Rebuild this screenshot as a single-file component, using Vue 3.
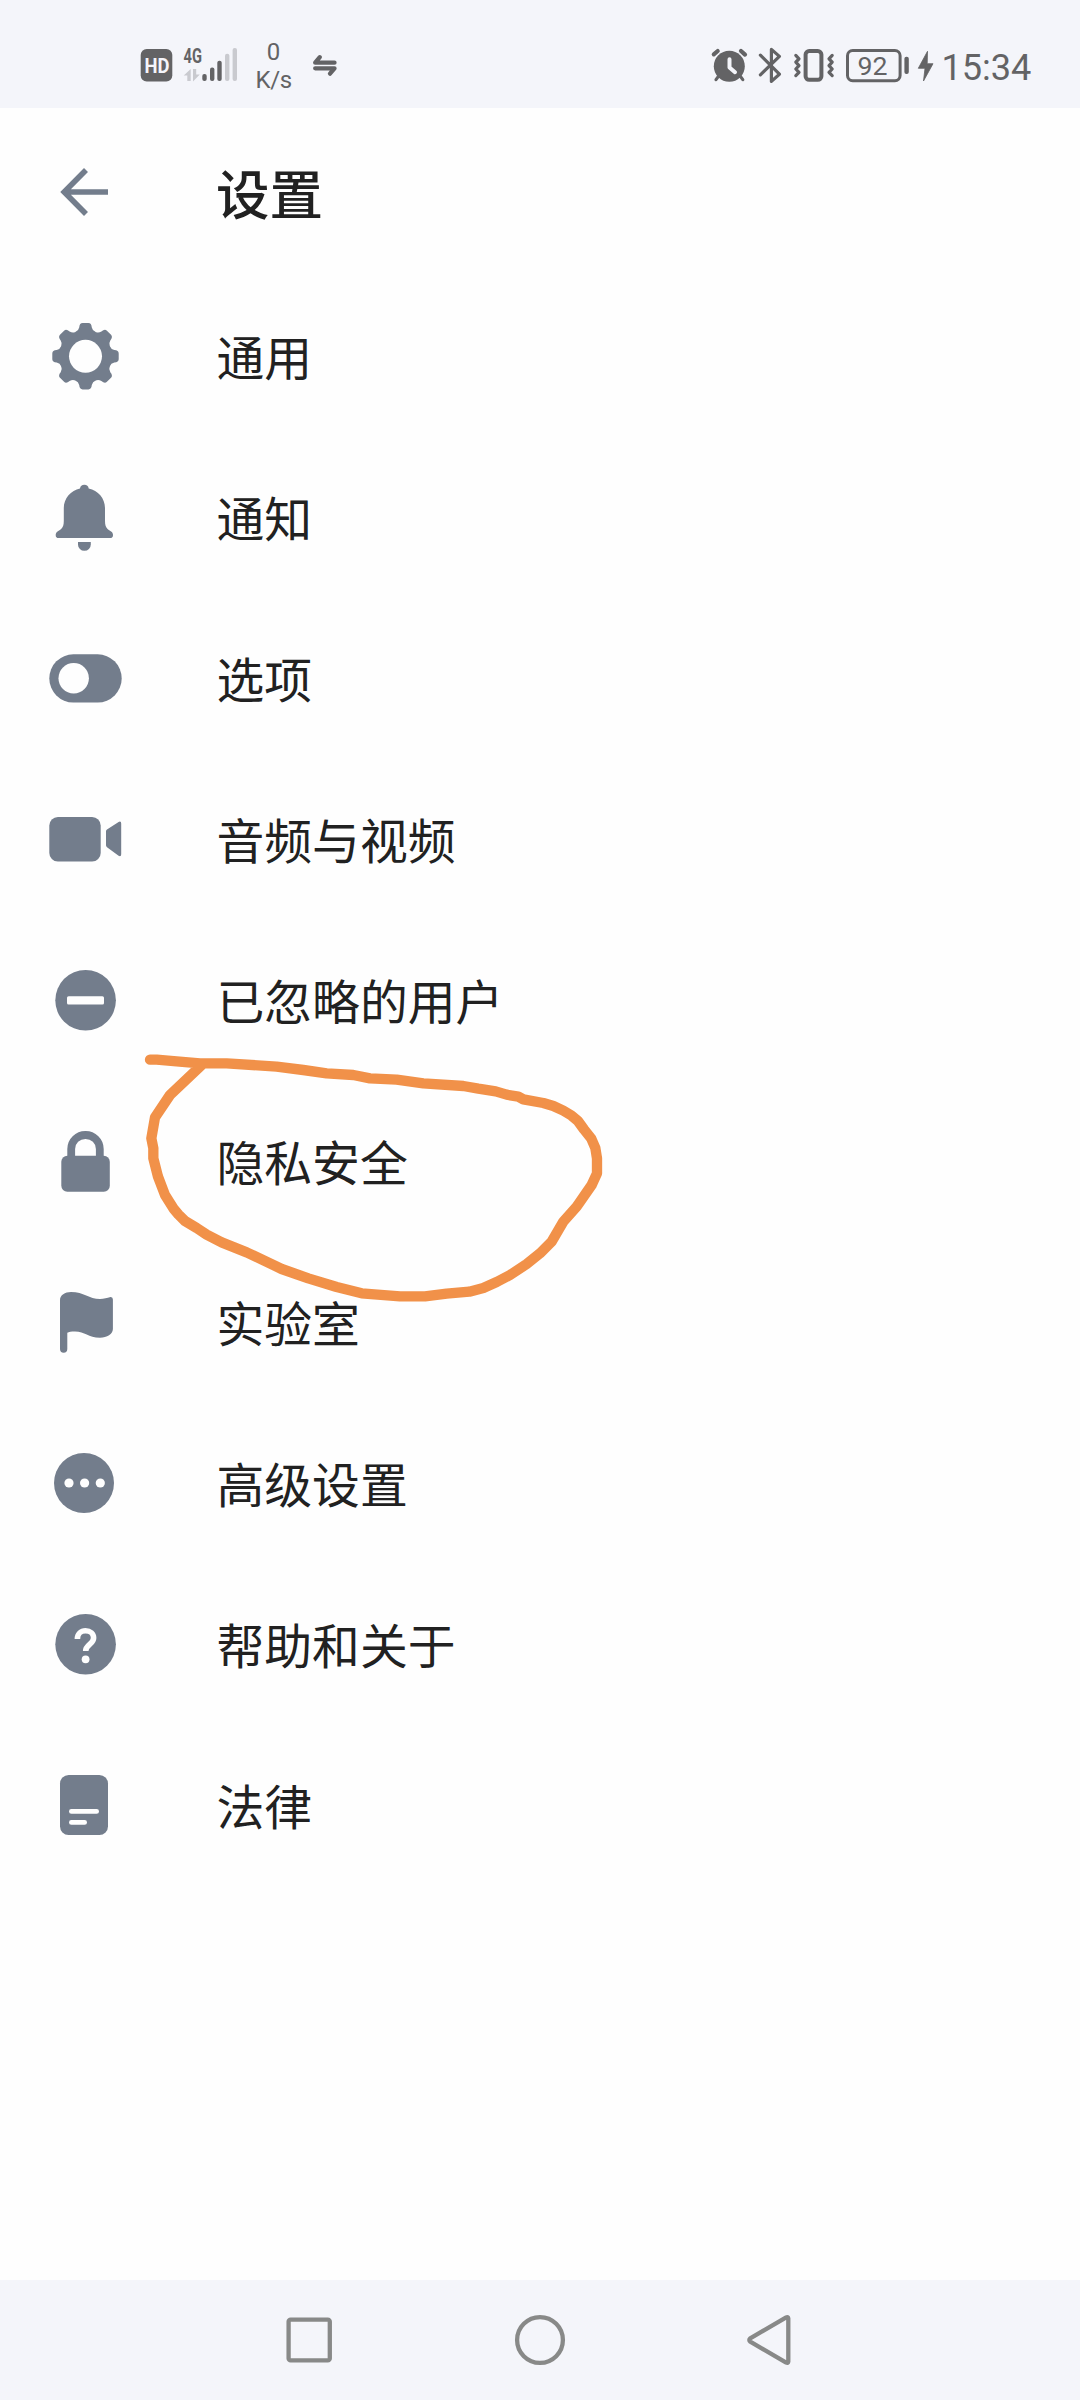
<script setup>
const items = [
  { icon: 'gear', label: '通用' },
  { icon: 'bell', label: '通知' },
  { icon: 'toggle', label: '选项' },
  { icon: 'video', label: '音频与视频' },
  { icon: 'ignored', label: '已忽略的用户' },
  { icon: 'lock', label: '隐私安全' },
  { icon: 'flag', label: '实验室' },
  { icon: 'more', label: '高级设置' },
  { icon: 'help', label: '帮助和关于' },
  { icon: 'legal', label: '法律' },
]
const teeth = [0, 45, 90, 135, 180, 225, 270, 315]
</script>

<template>
  <div class="screen">
    <header class="status">
      <svg class="status-left" width="400" height="108" viewBox="0 0 400 108">
        <rect x="140.7" y="49" width="31.6" height="32.6" rx="6" fill="#636365" />
        <text x="144.4" y="73" font-size="21" font-weight="700" fill="#f4f5fa" textLength="25" lengthAdjust="spacingAndGlyphs">HD</text>
        <text x="183.6" y="63" font-size="21" font-weight="700" textLength="18.4" lengthAdjust="spacingAndGlyphs">4G</text>
        <g fill="#c9cacf">
          <path d="M190.7 69V81H187.3V75.6H183.7Z" />
          <path d="M193 69H196.2V74.6H199.8L193 81.4Z" />
          <rect x="225" y="53.7" width="4.4" height="27.4" rx="2" />
          <rect x="232.6" y="48" width="4.4" height="33.1" rx="2" />
        </g>
        <rect x="202.3" y="74" width="4.4" height="7.1" rx="2" />
        <rect x="210" y="67.6" width="4.4" height="13.5" rx="2" />
        <rect x="217.3" y="60.7" width="4.4" height="20.4" rx="2" />
        <text x="273.6" y="60.4" font-size="24" text-anchor="middle">0</text>
        <text x="255.4" y="88.4" font-size="24" textLength="36.8">K/s</text>
        <g fill="none" stroke="#636365" stroke-width="4.3" stroke-linecap="round" stroke-linejoin="round">
          <path d="M334.5 62.7H315.2L319.8 57.2" />
          <path d="M315.2 68.3H334.5L330 73.6" />
        </g>
      </svg>
      <svg class="status-right" width="380" height="108" viewBox="700 0 380 108">
        <circle cx="729.3" cy="66.3" r="15.5" />
        <g fill="none" stroke="#636365" stroke-width="4.2" stroke-linecap="round" stroke-linejoin="round">
          <path d="M713.8 54.3L717.7 51M741 51L745 54.6" />
          <path stroke-width="3.2" d="M718.4 76.4L716 79.6M740.4 76.4L742.8 79.6" />
          <path stroke="#f4f5fa" stroke-width="4" d="M729.5 59.3V67.4L735 72.2" />
          <path stroke-width="3.2" d="M760.4 55.2L779.4 74.2L771.4 81.4V49.4L779.4 56.4L760.4 74.8" />
          <rect stroke-width="4" x="805.6" y="51" width="15.8" height="28.8" rx="3.6" />
          <path stroke-width="3.2" d="M795.8 55.4L799 58.8L795.8 62.2L799 65.6L795.8 69L799 72.4L795.8 75.6" />
          <path stroke-width="3.2" d="M832.2 55.4L829 58.8L832.2 62.2L829 65.6L832.2 69L829 72.4L832.2 75.6" />
          <rect stroke-width="3" x="847.5" y="50.5" width="52.6" height="30.2" rx="5.2" />
        </g>
        <rect x="904.4" y="56.7" width="4.4" height="17.4" rx="2" />
        <text x="857.6" y="75.4" font-size="26.5" textLength="30" lengthAdjust="spacingAndGlyphs">92</text>
        <path d="M927.5 51.3L918.3 68.3H925L923.5 81L933 63.7H927.2Z" stroke="#636365" stroke-width="0.8" stroke-linejoin="round" />
        <text x="941.4" y="80.3" font-size="37.5" textLength="90" lengthAdjust="spacingAndGlyphs">15:34</text>
      </svg>
    </header>

    <div class="toolbar">
      <svg class="icon" width="216" height="168" viewBox="0 0 216 168">
        <path d="M86 62L64.2 84L86 106M63 84H108" fill="none" stroke="#737d8c" stroke-width="5.6" />
      </svg>
      <h1 class="title">设置</h1>
    </div>

    <main class="list">
      <div v-for="item in items" :key="item.icon" class="row">
        <svg class="icon" width="216" height="161" viewBox="0 0 216 161">
          <g v-if="item.icon === 'gear'" transform="translate(85.5 80.3)">
            <circle r="26" />
            <path
              v-for="a in teeth"
              :key="a"
              :transform="`rotate(${a})`"
              d="M0 0L10.2 -24.2Q7 -25.4 6.3 -28.8Q5.9 -33.2 2.9 -33.2H-2.9Q-5.9 -33.2 -6.3 -28.8Q-7 -25.4 -10.2 -24.2Z"
            />
            <circle r="16.5" fill="#fefefe" />
          </g>
          <g v-else-if="item.icon === 'bell'">
            <path d="M80 51.6A4.4 4.4 0 0 1 88.7 51.6C98 53.5 105 61.5 105 71V84C105 92 108.5 92.5 111.5 94.8C112.7 95.8 113 97 113 98.2Q113 101 110 101H58.6Q55.7 101 55.7 98.2C55.7 97 56 95.8 57.2 94.8C60.2 92.5 63.8 92 63.8 84V71C63.8 61.5 71 53.5 80 51.6Z" />
            <path d="M78 105H90.8V107.4A6.4 6.4 0 0 1 78 107.4Z" />
          </g>
          <g v-else-if="item.icon === 'toggle'">
            <rect x="49.3" y="56.3" width="72.4" height="48.2" rx="24.1" />
            <circle cx="73.7" cy="80.3" r="15.2" fill="#fefefe" />
          </g>
          <g v-else-if="item.icon === 'video'">
            <rect x="49.3" y="58" width="51.4" height="44.6" rx="8.6" />
            <path d="M106 72.2Q106 71 107 70.4L118.6 62.9Q121.2 61.6 121.2 64.4V95.2Q121.2 98 118.6 96.8L107 88.2Q106 87.5 106 86.3Z" />
          </g>
          <g v-else-if="item.icon === 'ignored'">
            <circle cx="85.6" cy="80.3" r="30.3" />
            <rect x="67" y="76.2" width="37" height="8.4" rx="1.6" fill="#fefefe" />
          </g>
          <g v-else-if="item.icon === 'lock'">
            <rect x="61.3" y="74.7" width="48.5" height="36" rx="6" />
            <path d="M71.2 77V68A14.2 14 0 0 1 85.5 54A14.2 14 0 0 1 99.8 68V77" fill="none" stroke="#737d8c" stroke-width="7.8" />
          </g>
          <path
            v-else-if="item.icon === 'flag'"
            d="M60 58C60 53 65 50 71 50C84 50 89 57 100 57C104 57 107 55.8 110.5 55Q112.9 54.8 112.9 57.5V87C112.9 92 107 95.7 100 95.7C88 95.7 85 89.5 75 89.5C71 89.5 69 89.8 67.3 90.7V107A3.65 3.65 0 0 1 60 107Z"
          />
          <g v-else-if="item.icon === 'more'">
            <circle cx="84" cy="80" r="30" />
            <g fill="#fefefe">
              <circle cx="69" cy="80" r="4.6" />
              <circle cx="84.6" cy="80" r="4.6" />
              <circle cx="100.3" cy="80" r="4.6" />
            </g>
          </g>
          <g v-else-if="item.icon === 'help'">
            <circle cx="85.6" cy="80.3" r="30.3" />
            <path d="M77.4 75C77.4 70 81 66.8 85.5 66.8C90.3 66.8 93.6 70 93.6 74C93.6 80.3 85.7 80.6 85.7 87" fill="none" stroke="#fefefe" stroke-width="5.6" />
            <circle cx="85.6" cy="95.3" r="3.9" fill="#fefefe" />
          </g>
          <g v-else>
            <rect x="60" y="50" width="48" height="60" rx="8.6" />
            <rect x="69" y="84" width="30" height="4.8" rx="2.4" fill="#fefefe" />
            <rect x="69" y="95" width="18" height="4.8" rx="2.4" fill="#fefefe" />
          </g>
        </svg>
        <span class="label">{{ item.label }}</span>
      </div>
    </main>

    <nav class="nav">
      <svg width="1080" height="120" viewBox="0 0 1080 120" fill="none" stroke="#888988" stroke-width="4.3" stroke-linejoin="round">
        <rect x="288.6" y="39.6" width="41.2" height="40.8" rx="2" />
        <circle cx="540" cy="60" r="22.9" />
        <path d="M788.3 38.4Q788 36.6 786.2 37.4L750.2 58.4Q748.4 60 750.2 61.6L786.2 82.6Q788 83.4 788.3 81.6Z" />
      </svg>
    </nav>

    <svg class="scribble" width="500" height="290" viewBox="0 0 1500 870">
      <polyline
        points="60,89 80,89 140,94 210,100 290,100 440,110 520,120 590,130 670,135 720,145 800,149 880,160 1000,168 1045,176 1097,184 1130,194 1165,200 1180,208 1240,219 1270,228 1300,242 1325,257 1343,272 1362,298 1384,326 1396,354 1401,385 1401,430 1385,465 1340,530 1300,575 1265,635 1230,670 1190,702 1140,735 1100,756 1060,774 1018,785 950,791 885,799 810,799 695,790 620,771 535,745 455,717 350,667 275,637 230,614 200,594 165,573 145,553 130,535 105,495 84,440 70,385 70,355 64,325 75,262 120,195 215,105"
        fill="none"
        stroke="#f19149"
        stroke-width="31"
        stroke-linecap="round"
        stroke-linejoin="round"
      />
    </svg>
  </div>
</template>

<style>
body {
  margin: 0;
}
</style>

<style scoped>
.screen {
  position: relative;
  display: flex;
  flex-direction: column;
  width: 1080px;
  height: 2400px;
  background: #fefefe;
  overflow: hidden;
  font-family: "Noto Sans CJK SC", sans-serif;
  color: #212121;
}
.status {
  display: flex;
  justify-content: space-between;
  height: 108px;
  background: #f4f5fa;
  fill: #636365;
  font-family: Roboto, sans-serif;
}
.toolbar {
  display: flex;
  align-items: center;
  height: 168px;
}
.title {
  margin: 0 0 1px;
  font-size: 53.5px;
  font-weight: 500;
  line-height: 80px;
}
.list {
  flex: 1;
}
.row {
  display: flex;
  align-items: center;
  height: 161px;
}
.icon {
  display: block;
  flex: none;
  fill: #737d8c;
}
.label {
  margin: 0 0 2px 0.5px;
  font-size: 47.8px;
  line-height: 70px;
}
.nav {
  height: 120px;
  background: #f4f5fa;
}
.nav svg {
  display: block;
}
.scribble {
  position: absolute;
  left: 130px;
  top: 1030px;
}
</style>
